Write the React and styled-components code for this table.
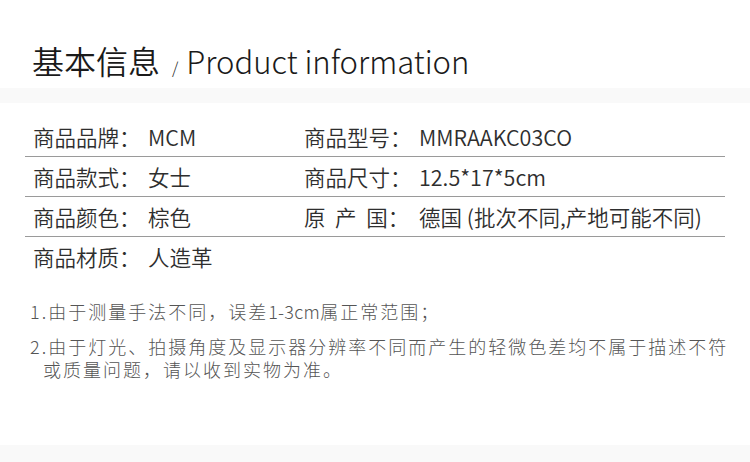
import React from "react";
import styled, { createGlobalStyle } from "styled-components";

const GlobalStyle = createGlobalStyle`
  body {
    margin: 0;
    background: #fff;
    font-family: "Noto Sans CJK SC", "Noto Sans", sans-serif;
  }
`;

const rows = [
  [
    { label: "商品品牌：", value: "MCM" },
    { label: "商品型号：", value: "MMRAAKC03CO" },
  ],
  [
    { label: "商品款式：", value: "女士" },
    { label: "商品尺寸：", value: "12.5*17*5cm" },
  ],
  [
    { label: "商品颜色：", value: "棕色" },
    { label: "原\u00a0\u00a0产\u00a0\u00a0国：", value: "德国 (批次不同,产地可能不同)" },
  ],
  [{ label: "商品材质：", value: "人造革" }],
];

const App = () => {
  return (
    <>
      <GlobalStyle />
      <Page>
        <Header>
          <TitleCn>基本信息</TitleCn>
          <Slash>/</Slash>
          <TitleEn>Product information</TitleEn>
        </Header>
        <Band />
        <Table>
          {rows.map((row, i) => (
            <Row key={i} $last={i === rows.length - 1}>
              {row.map((cell) => (
                <Cell key={cell.label}>
                  <Label>{cell.label}</Label>
                  <Value>{cell.value}</Value>
                </Cell>
              ))}
            </Row>
          ))}
        </Table>
        <Notes>
          <Note>
            1.由于测量手法不同，误差<Latin>1-3cm</Latin>属正常范围；
          </Note>
          <Note>
            2.由于灯光、拍摄角度及显示器分辨率不同而产生的轻微色差均不属于描述不符或质量问题，请以收到实物为准。
          </Note>
        </Notes>
        <Band $bottom />
      </Page>
    </>
  );
};

export default App;

const Page = styled.div`
  width: 750px;
  min-height: 462px;
  display: flex;
  flex-direction: column;
`;

const Header = styled.div`
  height: 88px;
  box-sizing: border-box;
  padding: 40px 0 0 32px;
  display: flex;
  align-items: baseline;
  color: #1a1a1a;
  line-height: 40px;
`;

const TitleCn = styled.span`
  font-size: 32px;
  font-weight: 350;
`;

const Slash = styled.span`
  font-size: 16px;
  font-weight: 300;
  margin: 0 8px 0 12px;
`;

const TitleEn = styled.span`
  font-size: 31px;
  font-weight: 300;
`;

const Band = styled.div`
  height: ${(p) => (p.$bottom ? "17px" : "15px")};
  background: #f9f9f9;
  margin-top: ${(p) => (p.$bottom ? "auto" : "0")};
`;

const Table = styled.div`
  margin: 14px 25px 0;
  width: 700px;
`;

const Row = styled.div`
  height: 39px;
  display: grid;
  grid-template-columns: 271px 1fr;
  align-items: center;
  border-bottom: ${(p) => (p.$last ? "1px solid transparent" : "1px solid #9a9a9a")};
`;

const Cell = styled.div`
  display: flex;
  align-items: center;
  padding-left: 8px;
  font-size: 21.5px;
  font-weight: 350;
  color: #2e2e2e;
  white-space: nowrap;
`;

const Label = styled.span`
  width: 115px;
  flex-shrink: 0;
`;

const Value = styled.span``;

const Notes = styled.div`
  padding: 23px 20px 0 30px;
  display: flex;
  flex-direction: column;
  gap: 12px;
`;

const Note = styled.p`
  margin: 0;
  font-size: 18px;
  font-weight: 300;
  letter-spacing: 2px;
  line-height: 23px;
  color: #555;
  padding-left: 13px;
  text-indent: -13px;
`;

const Latin = styled.span`
  letter-spacing: 0.3px;
`;
